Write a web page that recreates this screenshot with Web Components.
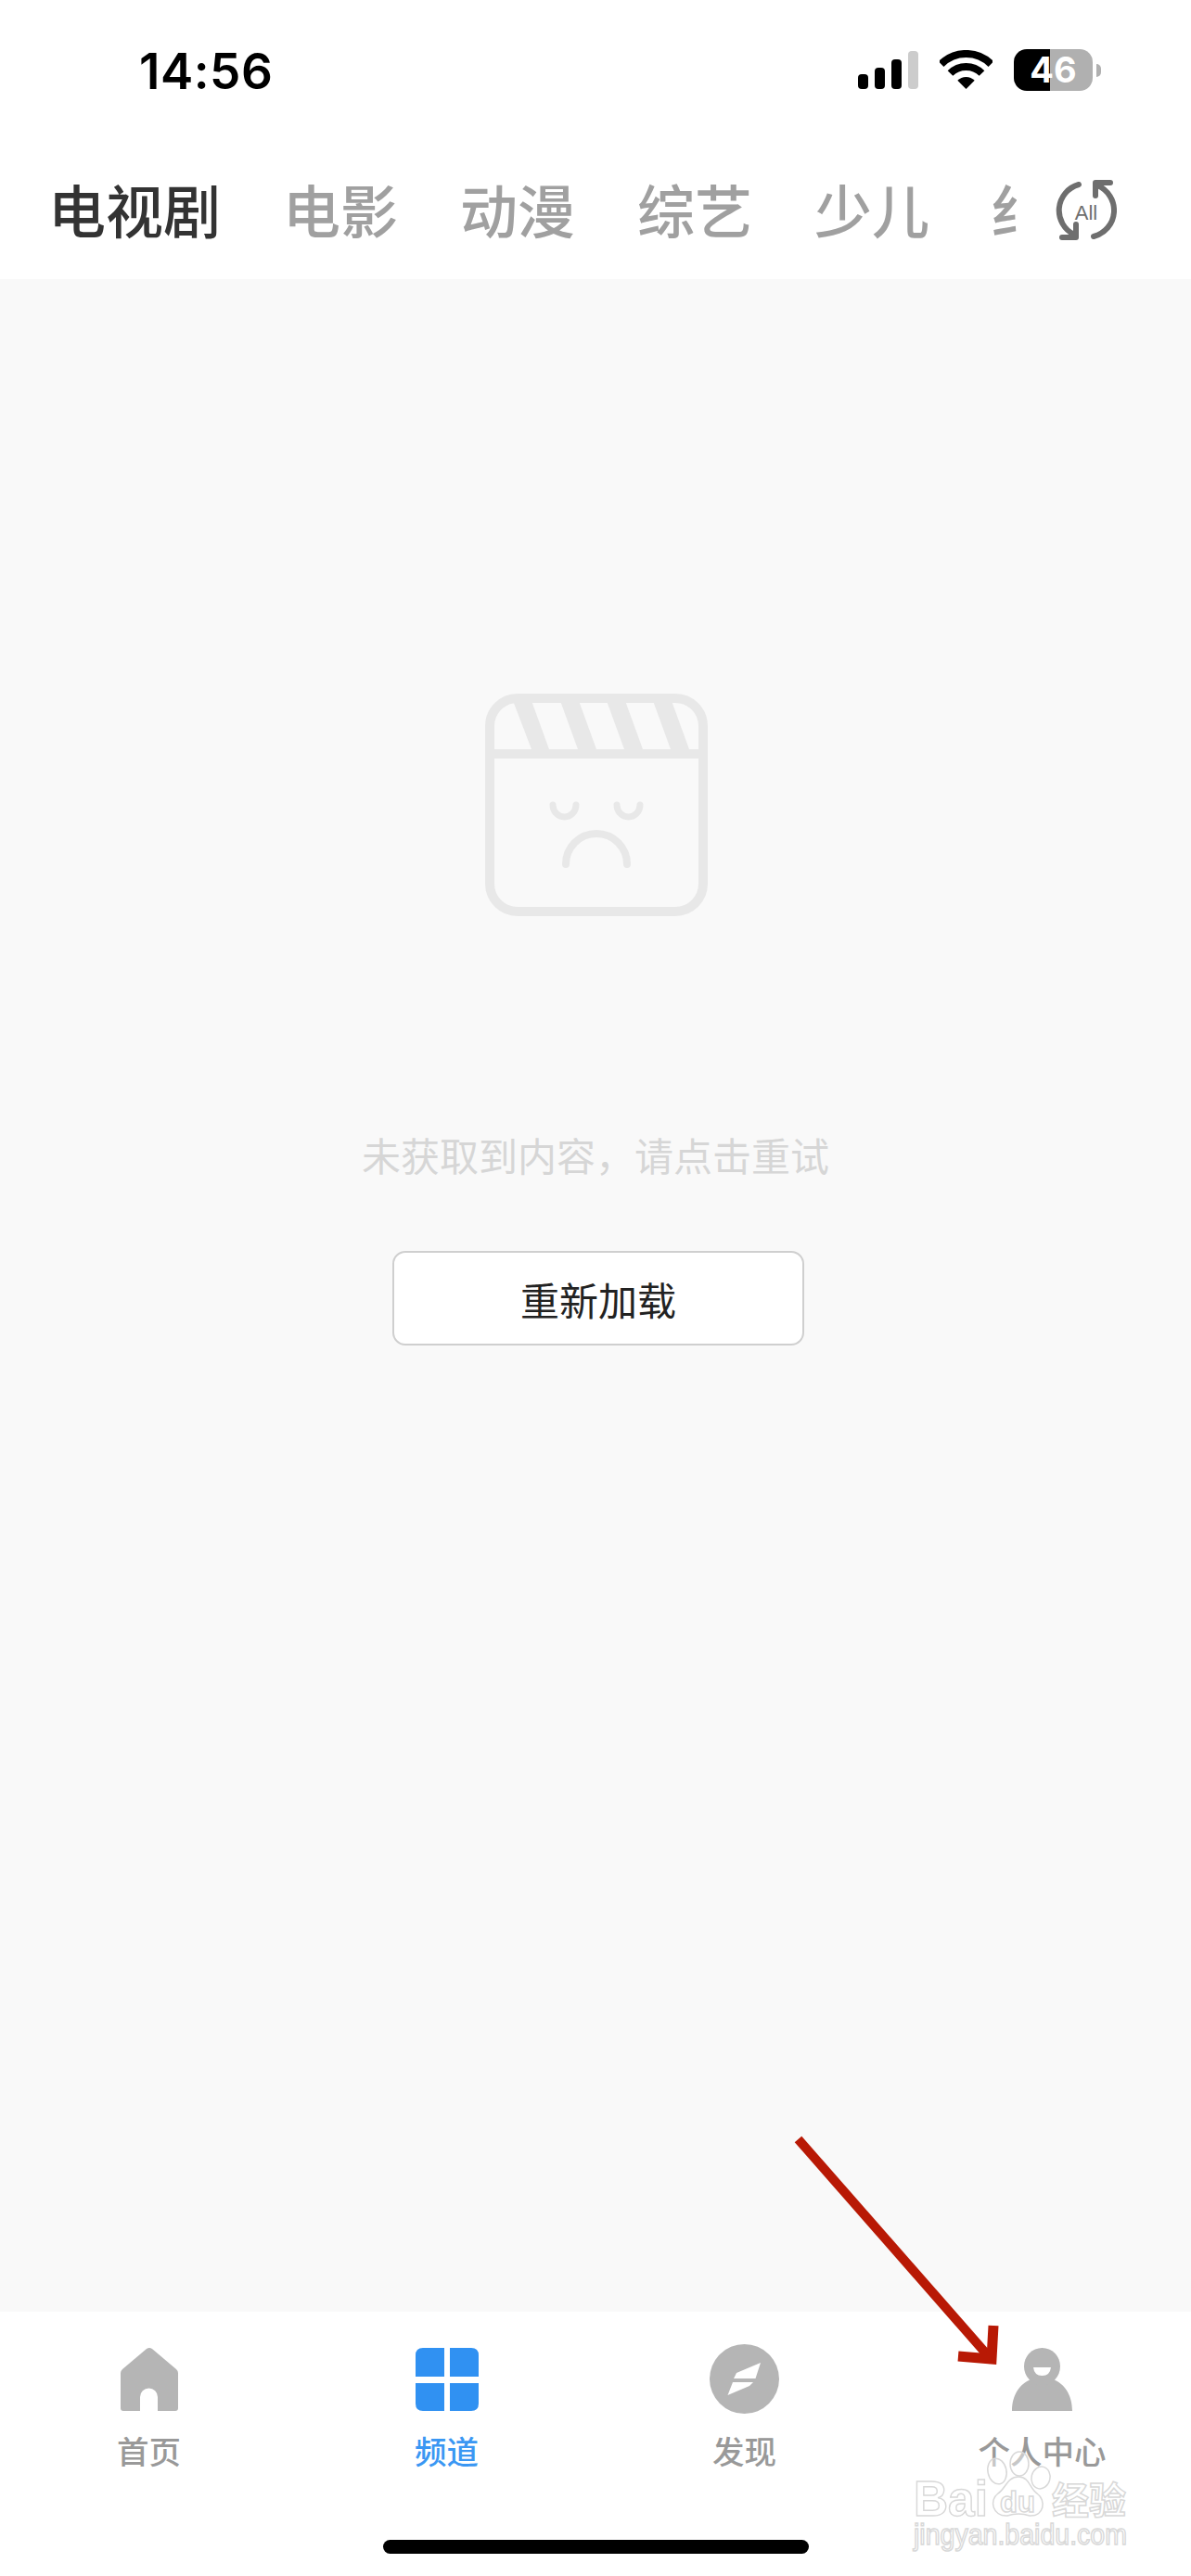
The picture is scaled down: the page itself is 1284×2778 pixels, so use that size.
<!DOCTYPE html>
<html lang="zh">
<head>
<meta charset="utf-8">
<title>频道</title>
<style>
  html, body { margin: 0; padding: 0; background: #fff; }
  body { font-family: "Noto Sans CJK SC", "Noto Sans", sans-serif; }
</style>
</head>
<body>
<phone-screen>
  <status-bar time="14:56" battery="46"></status-bar>
  <channel-tabs active="电视剧" items="电视剧,电影,动漫,综艺,少儿,纪录片"></channel-tabs>
  <empty-state message="未获取到内容&#xFF0C;请点击重试" action="重新加载"></empty-state>
  <tab-bar>
    <tab-item label="首页" icon="home"></tab-item>
    <tab-item label="频道" icon="grid" active></tab-item>
    <tab-item label="发现" icon="compass"></tab-item>
    <tab-item label="个人中心" icon="person"></tab-item>
  </tab-bar>
  <shot-overlay></shot-overlay>
</phone-screen>

<script>
class PhoneScreen extends HTMLElement {
  constructor() {
    super();
    this.attachShadow({ mode: 'open' });
    this.shadowRoot.innerHTML = `
      <style>
        :host {
          display: flex;
          flex-direction: column;
          position: relative;
          width: 1284px;
          height: 2778px;
          overflow: hidden;
          background: #fff;
          font-family: "Noto Sans CJK SC", "Noto Sans", sans-serif;
        }
      </style>
      <slot></slot>
    `;
  }
}

class StatusBar extends HTMLElement {
  connectedCallback() {
    const time = this.getAttribute('time') || '';
    const battery = this.getAttribute('battery') || '';
    this.attachShadow({ mode: 'open' });
    this.shadowRoot.innerHTML = `
      <style>
        :host {
          display: flex;
          align-items: center;
          height: 154px;
          padding: 0 97px 0 150px;
          flex: none;
        }
        .time {
          font: 600 53px/60px Inter, "Liberation Sans", sans-serif;
          color: #000;
          letter-spacing: .5px;
          flex: 1;
        }
        .icons { display: flex; align-items: flex-start; gap: 23px; align-self: flex-start; margin-top: 53px; }
        .signal { display: flex; align-items: flex-end; gap: 7px; height: 41px; margin-top: 2px; }
        .signal i { display: block; width: 11px; border-radius: 4px; background: #000; }
        .signal i:last-child { background: #ccc; }
        .wifi { display: block; margin-top: 1px; }
        .battery { display: flex; align-items: center; gap: 4px; }
        .cell {
          width: 85px;
          height: 45px;
          border-radius: 14px;
          background: linear-gradient(to right, #000 0 39px, #b0b0b0 39px);
          color: #fff;
          font: 700 38px/45px Inter, "Liberation Sans", sans-serif;
          text-align: center;
        }
        .nub { width: 5px; height: 14px; border-radius: 0 7px 7px 0; background: #b0b0b0; }
      </style>
      <div class="time">${time}</div>
      <div class="icons">
        <div class="signal">
          <i style="height:16px"></i><i style="height:23px"></i><i style="height:32px"></i><i style="height:41px"></i>
        </div>
        <svg class="wifi" width="57" height="42" viewBox="0 0 57 42">
          <path d="M1.600 15.100A38 38 0 0 1 55.400 15.100" fill="none" stroke="#000" stroke-width="8"/>
          <path d="M11.500 25A24 24 0 0 1 45.500 25" fill="none" stroke="#000" stroke-width="8"/>
          <path d="M28.500 42L19.300 32.800A13 13 0 0 1 37.700 32.800Z" fill="#000"/>
        </svg>
        <div class="battery">
          <div class="cell">${battery}</div>
          <div class="nub"></div>
        </div>
      </div>
    `;
  }
}

class ChannelTabs extends HTMLElement {
  connectedCallback() {
    const items = (this.getAttribute('items') || '').split(',');
    const active = this.getAttribute('active');
    const tabs = items.map(t => `<span class="${t === active ? 'on' : ''}">${t}</span>`).join('');
    this.attachShadow({ mode: 'open' });
    this.shadowRoot.innerHTML = `
      <style>
        :host {
          display: flex;
          align-items: center;
          height: 147px;
          flex: none;
          background: #fff;
        }
        .scroll {
          display: flex;
          gap: 67px;
          width: 1096px;
          height: 96px;
          padding-left: 52px;
          box-sizing: border-box;
          overflow: hidden;
          flex: none;
          margin-top: -5px;
        }
        span {
          flex: none;
          font-size: 62px;
          line-height: 96px;
          font-weight: 500;
          color: #a0a0a0;
        }
        span.on { color: #333; }
        svg { display: block; margin-left: 42px; margin-top: -2px; }
      </style>
      <div class="scroll">${tabs}</div>
      <svg width="66" height="66" viewBox="0 0 66 66" fill="none" stroke="#6e6e6e" stroke-width="6" stroke-linecap="round" stroke-linejoin="round">
        <path d="M25 5A29 29 0 0 0 20 59"/>
        <path d="M22 48V62H7"/>
        <path d="M41 61A29 29 0 0 0 45 6"/>
        <path d="M59 3H43V17"/>
        <text x="33" y="43" text-anchor="middle" fill="#6e6e6e" stroke="none" font-family="Liberation Sans, sans-serif" font-size="22">All</text>
      </svg>
    `;
  }
}

class EmptyState extends HTMLElement {
  connectedCallback() {
    this.attachShadow({ mode: 'open' });
    this.shadowRoot.innerHTML = `
      <style>
        :host {
          display: flex;
          flex-direction: column;
          align-items: center;
          flex: 1;
          background: #f9f9f9;
          padding-top: 447px;
          box-sizing: border-box;
        }
        svg { display: block; margin-left: 2px; }
        .msg {
          margin-top: 227px;
          font-size: 42px;
          line-height: 60px;
          color: #d6d6d6;
          white-space: nowrap;
        }
        button {
          display: block;
          width: 444px;
          height: 102px;
          margin: 74px 0 0 6px;
          padding: 0;
          box-sizing: border-box;
          border: 2px solid #cfcfcf;
          border-radius: 14px;
          background: #fff;
          color: #222;
          font: 400 42px/93px "Noto Sans CJK SC", sans-serif;
        }
      </style>
      <svg width="240" height="240" viewBox="0 0 240 240" fill="none" stroke="#e8e8e8">
        <rect x="5" y="5" width="230" height="230" rx="30" stroke-width="10"/>
        <path d="M5 65H235" stroke-width="10"/>
        <g fill="#e8e8e8" stroke="none">
          <path d="M29 5H49L69 60H50Z"/>
          <path d="M80 5H100L120 60H100Z"/>
          <path d="M130 5H150L170 60H150Z"/>
          <path d="M180 5H200L220 60H200Z"/>
        </g>
        <path d="M73 120A12.500 13 0 0 0 98 120M142 120A12.500 13 0 0 0 167 120" stroke-width="7" stroke-linecap="round"/>
        <path d="M87 184A33 33 0 0 1 153 184" stroke-width="8" stroke-linecap="round"/>
      </svg>
      <div class="msg">${this.getAttribute('message')}</div>
      <button>${this.getAttribute('action')}</button>
    `;
  }
}

class TabBar extends HTMLElement {
  constructor() {
    super();
    this.attachShadow({ mode: 'open' });
    this.shadowRoot.innerHTML = `
      <style>
        :host {
          display: flex;
          flex-direction: column;
          align-items: center;
          height: 285px;
          flex: none;
          padding-top: 35px;
          box-sizing: border-box;
          background: #fff;
        }
        .items { display: grid; grid-template-columns: repeat(4, 321px); }
        .home-bar { width: 459px; height: 15px; margin-top: 74px; border-radius: 8px; background: #000; }
      </style>
      <div class="items"><slot></slot></div>
      <div class="home-bar"></div>
    `;
  }
}

const TAB_ICONS = {
  home: `<svg width="62" height="68" viewBox="0 0 62 68"><path fill="#b5b5b5" d="M28 1Q31-1 34 1L60 23Q62 25 62 27V65Q62 68 59 68H40V53A9.500 9.500 0 0 0 21 53V68H3Q0 68 0 65V27Q0 25 2 23Z"/></svg>`,
  grid: `<svg width="68" height="68" viewBox="0 0 68 68"><path fill="#3091f2" d="M8 0H31V31H0V8Q0 0 8 0ZM37 0H60Q68 0 68 8V31H37ZM0 38H31V68H8Q0 68 0 60ZM37 38H68V60Q68 68 60 68H37Z"/></svg>`,
  compass: `<svg width="75" height="75" viewBox="0 0 75 75"><circle cx="37.500" cy="37.500" r="37.500" fill="#b5b5b5"/><path fill="#fff" d="M55 20L29 31L26 37H49.500ZM25 41H47L43 45L19.500 55Z"/></svg>`,
  person: `<svg width="65" height="68" viewBox="0 0 65 68"><path fill="#b5b5b5" d="M0 68C0 50 9 38 21 34Q32.500 44 44 34C56 38 65 50 65 68Z"/><ellipse cx="32.500" cy="20" rx="19.500" ry="20" fill="#b5b5b5"/><path fill="#fff" d="M23 21H42Q41 30 32.500 30Q24 30 23 21Z"/></svg>`
};

class TabItem extends HTMLElement {
  connectedCallback() {
    const on = this.hasAttribute('active');
    this.attachShadow({ mode: 'open' });
    this.shadowRoot.innerHTML = `
      <style>
        :host { display: flex; flex-direction: column; align-items: center; }
        .icon { display: flex; align-items: center; justify-content: center; height: 75px; }
        svg { display: block; }
        .label {
          margin-top: 16px;
          font-size: 34.500px;
          line-height: 46px;
          font-weight: 500;
          color: ${on ? '#3a97f3' : '#999'};
          white-space: nowrap;
        }
      </style>
      <div class="icon">${TAB_ICONS[this.getAttribute('icon')]}</div>
      <div class="label">${this.getAttribute('label')}</div>
    `;
  }
}

// flecha roja y marca de agua: van encima de la captura
class ShotOverlay extends HTMLElement {
  constructor() {
    super();
    this.attachShadow({ mode: 'open' });
    this.shadowRoot.innerHTML = `
      <style>
        :host { position: absolute; inset: 0; display: block; pointer-events: none; }
        svg { display: block; }
        text { font-family: "Liberation Sans", sans-serif; font-weight: 700; fill: #fff; stroke: #d8d8d8; stroke-width: 1.500; }
        .cjk { font-family: "Noto Sans CJK SC", sans-serif; }
        .url { font-weight: 400; }
      </style>
      <svg width="1284" height="2778" viewBox="0 0 1284 2778">
        <path d="M860.500 2307L1070 2546" fill="none" stroke="#b81905" stroke-width="10"/>
        <path d="M1071 2508L1069 2544L1033 2541" fill="none" stroke="#b81905" stroke-width="11"/>
        <g fill="rgba(255,255,255,.45)" stroke="#d8d8d8" stroke-width="1.500">
          <ellipse cx="1075" cy="2665" rx="10" ry="14" transform="rotate(-12 1075 2665)"/>
          <ellipse cx="1099" cy="2657" rx="10" ry="13"/>
          <ellipse cx="1122" cy="2672" rx="10" ry="12" transform="rotate(14 1122 2672)"/>
          <path d="M1098 2671C1086 2671 1084 2684 1076 2689C1066 2696 1070 2714 1086 2713Q1098 2709 1110 2713C1126 2714 1128 2696 1118 2689C1110 2684 1110 2671 1098 2671Z"/>
        </g>
        <text x="985" y="2713" font-size="54" textLength="80" lengthAdjust="spacingAndGlyphs">Bai</text>
        <text x="1078" y="2709" font-size="32" textLength="38" lengthAdjust="spacingAndGlyphs">du</text>
        <text class="cjk" x="1134" y="2711" font-size="40" textLength="80" lengthAdjust="spacingAndGlyphs">经验</text>
        <text class="url" x="985" y="2744" font-size="31" stroke-width="1" textLength="230" lengthAdjust="spacingAndGlyphs">jingyan.baidu.com</text>
      </svg>
    `;
  }
}

customElements.define('phone-screen', PhoneScreen);
customElements.define('status-bar', StatusBar);
customElements.define('channel-tabs', ChannelTabs);
customElements.define('empty-state', EmptyState);
customElements.define('tab-bar', TabBar);
customElements.define('tab-item', TabItem);
customElements.define('shot-overlay', ShotOverlay);
</script>
</body>
</html>
